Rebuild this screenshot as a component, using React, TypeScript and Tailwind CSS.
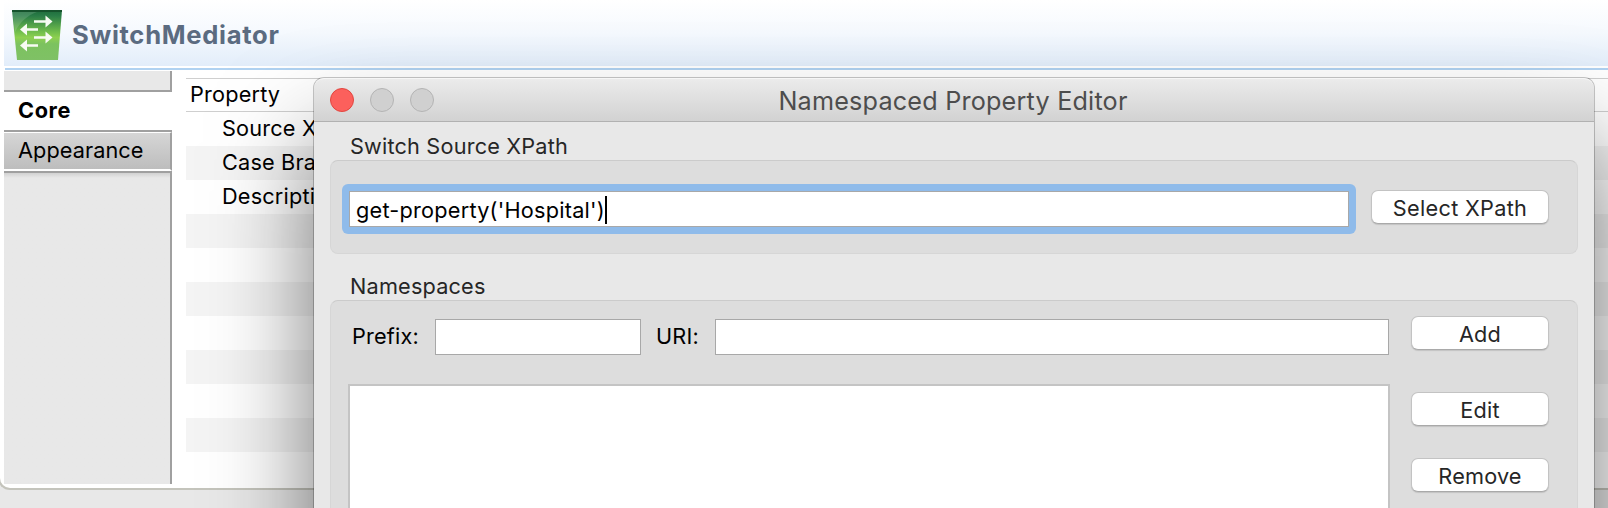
import type { ReactNode } from "react";

function SwitchIcon() {
  return (
    <svg width="50" height="50" viewBox="0 0 50 50" className="shrink-0">
      <defs>
        <linearGradient id="body" x1="0" y1="0" x2="0" y2="1">
          <stop offset="0" stopColor="#1d6b3c" />
          <stop offset="0.12" stopColor="#2a7d47" />
          <stop offset="0.45" stopColor="#74c04c" />
          <stop offset="0.55" stopColor="#8dd04f" />
          <stop offset="0.68" stopColor="#7cc25f" />
          <stop offset="1" stopColor="#7fc165" />
        </linearGradient>
      </defs>
      <path d="M0 0H50L46 50H5Z" fill="url(#body)" />
      <path d="M0 0H32C18 3 9 10 3 22Z" fill="#fff" opacity="0.14" />
      <path d="M0 0H50V2H0Z" fill="#15522c" />
      <g fill="none" stroke="#f7fbf3" strokeWidth="2.6">
        <path d="M22 11.5H36M26 19.5H13M22 27.5H36M26 35.5H13" />
      </g>
      <g fill="#f7fbf3">
        <path d="M33.5 5.5L40.5 11.5L33.5 17.5Z" />
        <path d="M15 13.5L8 19.5L15 25.5Z" />
        <path d="M33.5 21.5L40.5 27.5L33.5 33.5Z" />
        <path d="M15 29.5L8 35.5L15 41.5Z" />
      </g>
    </svg>
  );
}

function PushButton({ children, className }: { children: ReactNode; className: string }) {
  return (
    <button
      className={`flex h-[34px] items-center justify-center rounded-[7px] border border-[#c3c3c3] border-b-[#a9a9a9] bg-white pt-[3px] leading-none whitespace-nowrap text-[#262626] shadow-[0_1px_1px_rgba(0,0,0,0.12)] ${className}`}
    >
      {children}
    </button>
  );
}

const rows = ["Source XPath", "Case Branches", "Description", "", "", "", "", "", "", "", ""];

function Sidebar() {
  return (
    <div className="ml-1 flex h-[413px] w-[168px] shrink-0 flex-col">
      <div className="h-[19px] border-r-2 border-[#a0a0a0] bg-[#e8e8e8]" />
      <div className="flex h-[42px] items-center border-y-2 border-[#a0a0a0] bg-white pl-[14px] leading-none font-bold tracking-[0.6px]">
        Core
      </div>
      <div className="flex h-[39px] items-center border-t border-r-2 border-b-2 border-t-white border-r-[#a0a0a0] border-b-white bg-linear-to-b from-[#d6d6d6] to-[#bdbdbd] pl-[14px] leading-none tracking-[0.08px]">
        Appearance
      </div>
      <div className="h-[2px] bg-[#a0a0a0]" />
      <div className="flex-1 border-r-2 border-[#a0a0a0] bg-[#e8e8e8] bg-linear-to-b from-[#d2d2d2] to-[#e8e8e8] to-[5px]" />
    </div>
  );
}

function PropertyTable() {
  return (
    <div className="mt-[7px] ml-[14px] flex-1 overflow-hidden">
      <div className="flex h-[34px] items-center border-y border-[#cfcfcf] pl-[4px] leading-none">Property</div>
      {rows.map((r, i) => (
        <div
          key={i}
          className={`flex h-[34px] items-center pl-[36px] leading-none whitespace-nowrap ${i % 2 ? "bg-[#f4f4f4]" : "bg-white"}`}
        >
          {r}
        </div>
      ))}
    </div>
  );
}

function Dialog() {
  return (
    <div className="absolute top-[78px] left-[314px] h-[620px] w-[1280px] rounded-t-[10px] bg-[#e8e8e8] shadow-[0_0_0_1px_rgba(0,0,0,0.22),0_64px_100px_rgba(0,0,0,0.54)]">
      <div className="flex h-[44px] items-center rounded-t-[10px] border-t border-b border-t-[#f6f6f6] border-b-[#b1b1b1] bg-linear-to-b from-[#ebebeb] to-[#d2d2d2] pl-4">
        <div className="flex w-[104px] gap-4">
          <div className="h-6 w-6 rounded-full border border-[#e2463f] bg-[#fc605c]" />
          <div className="h-6 w-6 rounded-full border border-[#b4b4b4] bg-[#d0d0d0]" />
          <div className="h-6 w-6 rounded-full border border-[#b4b4b4] bg-[#d0d0d0]" />
        </div>
        <div className="flex-1 pt-[3px] pr-[122px] text-center text-[25.2px] leading-none tracking-[0.2px] text-[#4d4d4d]">
          Namespaced Property Editor
        </div>
      </div>

      <div className="pr-4 pl-4">
        <div className="flex h-[38px] items-center pt-[11px] pl-[20px] leading-none text-[#262626]">Switch Source XPath</div>
        <div className="flex h-[94px] items-start rounded-[8px] border border-[#d6d6d6] border-t-[#cbcbcb] bg-[#dddddd] pt-[23px] pl-[11px]">
          <div className="h-[50px] w-[1014px] rounded-[6px] bg-[#8fbbea] p-[7px]">
            <div className="flex h-[36px] items-center border border-[#a8a8a8] bg-white pt-[2px] pl-[6px] leading-none">
              <span className="pt-[2px] tracking-[0.23px]">get-property('Hospital')</span>
              <span className="h-[28px] w-[2px] bg-black" />
            </div>
          </div>
          <PushButton className="mt-[6px] ml-[15px] w-[178px] tracking-[0.3px]">Select XPath</PushButton>
        </div>

        <div className="flex h-[46px] items-center pt-[20px] pl-[20px] leading-none text-[#262626]">Namespaces</div>
        <div className="flex h-[240px] rounded-[8px] border border-[#d6d6d6] border-t-[#cbcbcb] bg-[#dddddd]">
          <div className="w-[1059px] shrink-0 pt-[18px] pl-[17px]">
            <div className="flex h-[36px] items-center leading-none">
              <span className="w-[87px] pl-[4px]">Prefix:</span>
              <span className="h-[36px] w-[206px] border border-[#a8a8a8] bg-white" />
              <span className="w-[74px] pl-[15px]">URI:</span>
              <span className="h-[36px] w-[674px] border border-[#a8a8a8] bg-white" />
            </div>
            <div className="mt-[29px] h-[200px] w-[1042px] border-2 border-[#c4c4c4] bg-white" />
          </div>
          <div className="ml-[21px] flex flex-col pt-[15px]">
            <PushButton className="w-[138px]">Add</PushButton>
            <PushButton className="mt-[42px] w-[138px]">Edit</PushButton>
            <PushButton className="mt-[32px] w-[138px]">Remove</PushButton>
          </div>
        </div>
      </div>
    </div>
  );
}

export default function App() {
  return (
    <div className="relative h-[508px] w-[1608px] overflow-hidden bg-[#e8e8e8] font-['Inter',sans-serif] text-[21.7px] tracking-[0.18px] text-black">
      <div className="-ml-[2px] h-[490px] w-[1630px] overflow-hidden rounded-bl-[12px] border-b-2 border-l-2 border-[#c4c4bc] bg-white">
        <div className="ml-1 flex h-[66px] items-center bg-linear-to-b from-white via-[#f5f9fe] to-[#e2edfa] pt-[4px] pl-2">
          <SwitchIcon />
          <span className="pb-[1px] pl-[10px] text-[25.6px] leading-none font-bold tracking-[0.7px] text-[#5b6b80]">
            SwitchMediator
          </span>
        </div>
        <div className="mt-[2px] mb-[1px] ml-[5px] h-[2px] bg-[#b0d2f1]" />
        <div className="flex">
          <Sidebar />
          <PropertyTable />
        </div>
      </div>
      <Dialog />
    </div>
  );
}
